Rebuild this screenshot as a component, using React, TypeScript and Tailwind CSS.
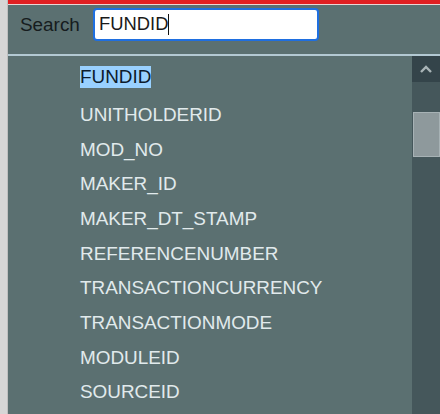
import React from "react";

const items = [
  "FUNDID",
  "UNITHOLDERID",
  "MOD_NO",
  "MAKER_ID",
  "MAKER_DT_STAMP",
  "REFERENCENUMBER",
  "TRANSACTIONCURRENCY",
  "TRANSACTIONMODE",
  "MODULEID",
  "SOURCEID",
];

export default function App() {
  return (
    <div
      className="w-[440px] h-[414px] flex overflow-hidden bg-[#5b7071]"
      style={{ fontFamily: '"Liberation Sans", Arial, sans-serif' }}
    >
      <div className="w-[8px] h-full bg-[#d6d6d6] border-r border-[#bfbfbf]" />
      <div className="flex-1 flex flex-col min-w-0">
        <div className="h-[4px] bg-[#e11f22]" />
        <div className="h-[1px] bg-[#ead6d6]" />
        <div className="h-[49px] flex items-start pt-[3px] pl-[12px]">
          <span className="text-[18.9px] leading-[33px] text-[#161c1e] w-[73px]">Search</span>
          <div className="w-[226px] h-[33px] bg-white border-2 border-[#1f6fe0] rounded-[4px] flex items-center pl-[4px]">
            <span className="text-[18.4px] text-[#1a1a1a] leading-none">FUNDID</span>
            <span className="w-[1px] h-[21px] bg-[#111]" />
          </div>
        </div>
        <div className="h-[2px] bg-[#b3c9d3]" />
        <div className="flex-1 flex min-h-0">
          <div className="flex-1 pt-[3.6px] pl-[72px]">
            {items.map((it, i) => (
              <div
                key={it}
                className={`h-[34.7px] flex items-center ${i === 0 ? "mb-[3.3px]" : ""}`}
              >
                {i === 0 ? (
                  <span className="bg-[#99d1ff] text-[#0d1c2c] text-[18.9px] leading-[22px]">
                    {it}
                  </span>
                ) : (
                  <span className="text-[#e1eaec] text-[18.9px] leading-[22px]">{it}</span>
                )}
              </div>
            ))}
          </div>
          <div className="w-[28px] bg-[#45575b] flex flex-col">
            <div className="h-[26px] bg-[#34444a] flex items-center justify-center">
              <svg width="14" height="9" viewBox="0 0 14 9">
                <path d="M2 7 L7 2 L12 7" stroke="#a9b4b7" strokeWidth="2.4" fill="none" />
              </svg>
            </div>
            <div className="h-[30px]" />
            <div className="h-[45px] ml-[1px] bg-[#8e999c] border border-[#a7b2b5]" />
          </div>
        </div>
      </div>
    </div>
  );
}
